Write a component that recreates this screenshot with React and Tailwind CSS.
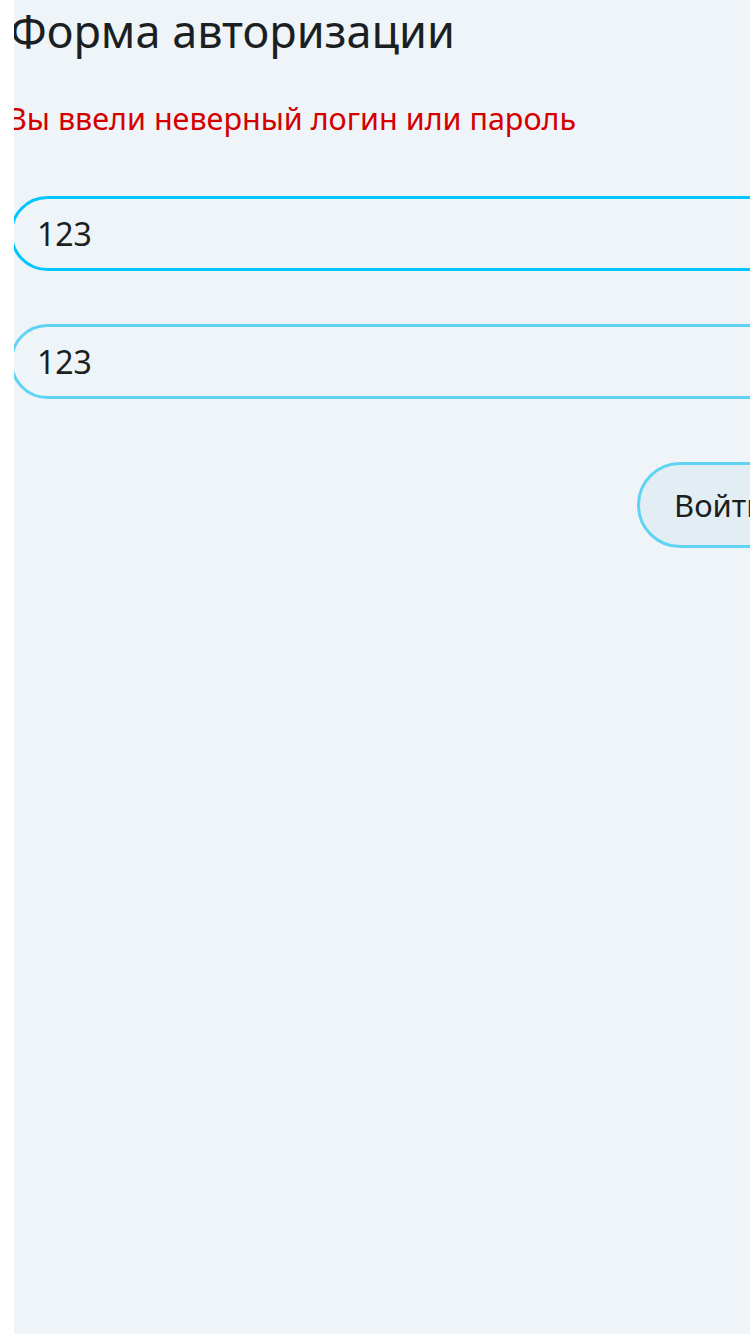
export default function App() {
  const font = { fontFamily: '"Noto Sans", "DejaVu Sans", sans-serif' };
  return (
    <div className="flex min-h-[1334px] w-[750px] overflow-hidden bg-white" style={font}>
      <div className="w-[14px] shrink-0 bg-white" />
      <div className="relative flex-1 overflow-hidden bg-[#eef4f7]">
        <div className="-ml-[4px] flex w-[800px] flex-col">
          <h1 className="mt-[1px] text-[45px] font-normal leading-[60px] text-[#1b1f22]">
            Форма авторизации
          </h1>
          <p className="-ml-[3px] mt-[39px] text-[30.5px] leading-[36px] text-[#d40000]">
            Вы ввели неверный логин или пароль
          </p>
          <div className="mt-[60px] flex flex-col gap-[53px]">
            <input
              defaultValue="123"
              className="h-[75px] w-full rounded-[38px] border-[3px] border-[#00c6ff] bg-transparent pl-[24px] text-[32px] text-[#1b1f22] outline-none"
              style={font}
            />
            <input
              defaultValue="123"
              className="h-[75px] w-full rounded-[38px] border-[3px] border-[#60d3f3] bg-transparent pl-[24px] text-[32px] text-[#1b1f22] outline-none"
              style={font}
            />
          </div>
          <div className="mt-[63px] flex">
            <button
              className="ml-[627px] h-[86px] rounded-[43px] border-[3px] border-[#60d3f3] bg-[#e2eef4] px-[34px] text-[31px] text-[#1b1f22]"
              style={font}
            >
              Войти
            </button>
          </div>
        </div>
      </div>
    </div>
  );
}
